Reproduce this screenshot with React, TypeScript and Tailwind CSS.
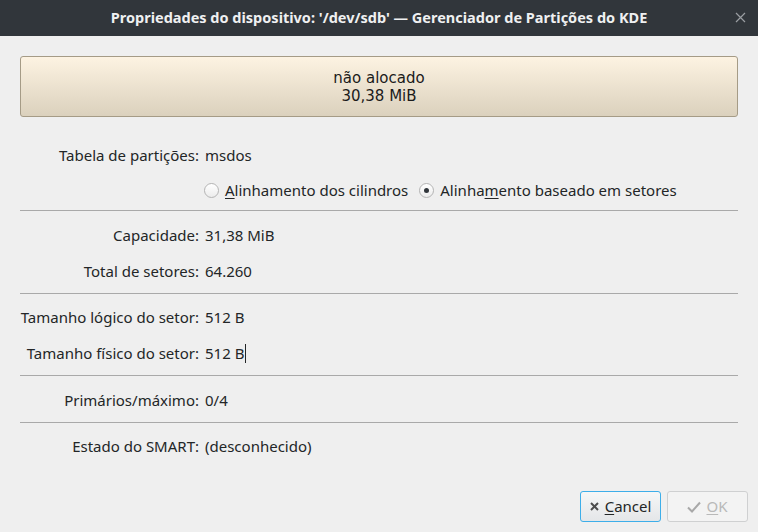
import React from 'react';

const Row = ({ label, value, cursor }: { label: string; value: string; cursor?: boolean }) => (
  <div className="flex h-[36px] items-center">
    <div className="w-[199px] shrink-0 text-right">{label}</div>
    <div className="ml-[6px] flex items-center">
      {value}
      {cursor && <span className="ml-[1px] inline-block h-[19px] w-[1px] bg-[#232627]" />}
    </div>
  </div>
);

const Sep = () => <div className="mx-[20px] h-px bg-[#a9a9a9]" />;

const Radio = ({ checked }: { checked?: boolean }) => (
  <span className="flex h-[15px] w-[15px] items-center justify-center rounded-full border border-[#b4b4b4] bg-gradient-to-b from-[#ffffff] to-[#ececec]">
    {checked && <span className="h-[5px] w-[5px] rounded-full bg-[#31363b]" />}
  </span>
);

export default function App() {
  return (
    <div className="flex h-[532px] w-[758px] flex-col bg-[#efefef] text-[15px] text-[#232627] [font-family:'Noto_Sans',sans-serif]">
      {/* title bar */}
      <div className="relative flex h-[36px] shrink-0 items-center justify-center bg-[#31363b] text-[14.5px] font-bold text-[#eff0f1]">
        Propriedades do dispositivo: '/dev/sdb' — Gerenciador de Partições do KDE
        <svg className="absolute right-[12px] top-[12px]" width="11" height="11" viewBox="0 0 11 11">
          <path d="M1 1L10 10M10 1L1 10" stroke="#9a9ea2" strokeWidth="1.2" />
        </svg>
      </div>

      {/* partition graphic */}
      <div className="mx-[20px] mt-[20px] flex h-[61px] flex-col items-center justify-center rounded-[3px] border border-[#a59b86] bg-gradient-to-b from-[#fdf3e2] to-[#dbd1bd] text-[15px] leading-[18px] text-[#1b1b1b] [font-family:'DejaVu_Sans',sans-serif]">
        <div>não alocado</div>
        <div>30,38 MiB</div>
      </div>

      <div className="mt-[20px]">
        <Row label="Tabela de partições:" value="msdos" />
        <div className="flex h-[34px] items-center pl-[204px]">
          <label className="flex items-center gap-[6px]">
            <Radio />
            <span>
              <span className="underline underline-offset-2">A</span>linhamento dos cilindros
            </span>
          </label>
          <label className="ml-[11px] flex items-center gap-[6px]">
            <Radio checked />
            <span>
              Alinha<span className="underline underline-offset-2">m</span>ento baseado em setores
            </span>
          </label>
        </div>
        <div className="h-[3px]" />
        <Sep />
        <div className="h-[6px]" />
        <Row label="Capacidade:" value="31,38 MiB" />
        <Row label="Total de setores:" value="64.260" />
        <div className="h-[4px]" />
        <Sep />
        <div className="h-[5px]" />
        <Row label="Tamanho lógico do setor:" value="512 B" />
        <Row label="Tamanho físico do setor:" value="512 B" cursor />
        <div className="h-[4px]" />
        <Sep />
        <div className="h-[6px]" />
        <Row label="Primários/máximo:" value="0/4" />
        <div className="h-[4px]" />
        <Sep />
        <div className="h-[5px]" />
        <Row label="Estado do SMART:" value="(desconhecido)" />
      </div>

      {/* buttons */}
      <div className="mt-auto mb-[10px] flex justify-end gap-[6px] pr-[10px]">
        <button className="flex h-[31px] w-[81px] items-center justify-center gap-[6px] rounded-[3px] border border-[#3daee9] bg-gradient-to-b from-[#f6f7f7] to-[#e4e6e8] text-[#232627]">
          <svg width="9" height="9" viewBox="0 0 9 9">
            <path d="M1 1L8 8M8 1L1 8" stroke="#4d4d4d" strokeWidth="2" />
          </svg>
          <span>
            <span className="underline underline-offset-2">C</span>ancel
          </span>
        </button>
        <button className="flex h-[31px] w-[81px] items-center justify-center gap-[5px] rounded-[3px] border border-[#cfd0d1] bg-[#f3f3f3] text-[#b9b9b9]">
          <svg width="14" height="12" viewBox="0 0 14 12">
            <path d="M1 6.5L5 10.5L13 1.5" fill="none" stroke="#a8a8a8" strokeWidth="2" />
          </svg>
          <span>
            <span className="underline underline-offset-2">O</span>K
          </span>
        </button>
      </div>
    </div>
  );
}
